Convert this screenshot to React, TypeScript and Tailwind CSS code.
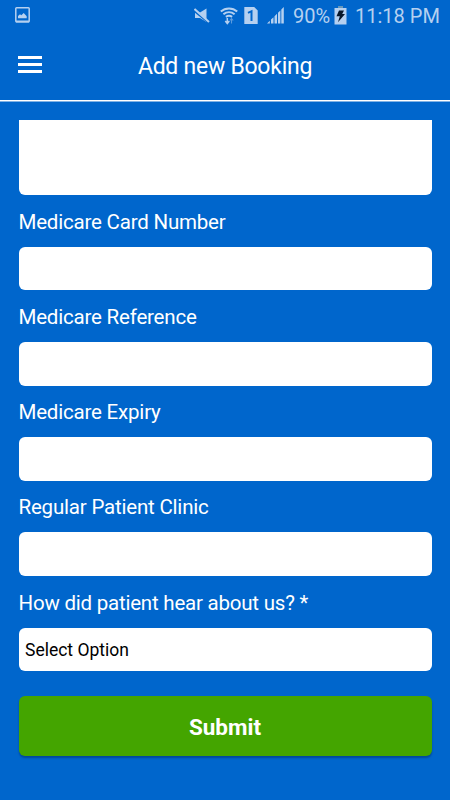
import { useState } from 'react';

interface Field {
  label: string;
  name: string;
}

const fields: Field[] = [
  { label: 'Medicare Card Number', name: 'cardNumber' },
  { label: 'Medicare Reference', name: 'reference' },
  { label: 'Medicare Expiry', name: 'expiry' },
  { label: 'Regular Patient Clinic', name: 'clinic' },
];

const StatusBar = () => (
  <div className="flex h-[31px] items-center justify-between pl-[15px] pr-[12px] text-[#b5d0f0]">
    <svg width="15" height="16" viewBox="0 0 15 16" fill="none" className="-mt-px">
      <rect x="0.8" y="0.8" width="13.4" height="14" rx="0.8" stroke="currentColor" strokeWidth="1.5" />
      <path d="M1 13.5h13v2H1z" fill="currentColor" />
      <path d="M3 11.3V9l2-1.7 1.3 1L8.7 6l3 3.2v2.1z" fill="currentColor" />
    </svg>
    <div className="flex items-center">
      <svg width="16" height="15" viewBox="0 0 16 15" className="mr-[10px]">
        <path d="M1 4.5h5L12.5.5v13.5L6 10H1z" fill="currentColor" />
        <path d="M.5 2.8l14 11.4" stroke="#0066cc" strokeWidth="2.4" />
        <path d="M.5 1l14.5 13" stroke="currentColor" strokeWidth="2" />
      </svg>
      <svg width="18" height="18" viewBox="0 0 18 18" fill="none" stroke="currentColor" className="mr-[6px]">
        <path d="M.8 4.6C5.5.4 12.5.4 17.2 4.6M3.4 7.3c3.3-2.8 7.9-2.8 11.2 0M5.9 9.9c1.9-1.5 4.3-1.5 6.2 0" strokeWidth="2" />
        <path d="M7.3 11v5M5.3 14l2 2.5 2-2.5" strokeWidth="1.5" />
        <path d="M11.5 16.5v-5M9.8 13.5l1.7-2 1.7 2" strokeWidth="1.1" opacity="0.5" />
      </svg>
      <svg width="14" height="17" viewBox="0 0 14 17" className="mr-[9px]">
        <path d="M.3 0h9.9l3.5 3.6V17H.3z" fill="currentColor" />
        <path d="M4 5.8l3.5-1.6v9.8" stroke="#0066cc" strokeWidth="2" fill="none" />
      </svg>
      <svg width="17" height="17" viewBox="0 0 17 17" fill="currentColor" className="mr-[9px]">
        <path d="M0 16.5L2.8 13.7v2.8H0zM4 12.5l2.5-2.3v6.3H4zM7.5 9.2l2.5-2.4v9.7H7.5zM11 5.8l2.4-2.3v13H11zM14.3 2.4L16.8 0v16.5h-2.5z" />
      </svg>
      <span className="w-[37px] whitespace-nowrap text-[20px] leading-[30px]">90%</span>
      <svg width="13" height="19" viewBox="0 0 13 19" className="ml-[4px] mr-[8px]">
        <path d="M4 0h5v2H4z" fill="#6998ba" />
        <path d="M.5 2h12v16.5H.5z" fill="currentColor" />
        <path d="M5 4.5h5L8.2 8h2.8l-7 8.3 1.8-6H2.5z" fill="#07172b" />
      </svg>
      <span className="w-[83px] whitespace-nowrap text-[20px] leading-[30px]">11:18 PM</span>
    </div>
  </div>
);

const Header = () => (
  <header className="grid h-[70px] grid-cols-[100px_250px_100px] items-center border-b border-white shadow-[0_1px_0_#80b2e5]">
    <button aria-label="Menu" className="mb-[3px] ml-[18px] flex w-6 flex-col gap-1">
      <span className="h-[3px] w-full bg-white" />
      <span className="h-[3px] w-full bg-white" />
      <span className="h-[3px] w-full bg-white" />
    </button>
    <h1 className="whitespace-nowrap pt-[2px] text-center text-[23px] leading-[30px] tracking-[-0.25px]">Add new Booking</h1>
  </header>
);

export default function App() {
  const [values, setValues] = useState<Record<string, string>>({});

  return (
    <div className="h-[800px] w-[450px] overflow-hidden bg-[#0066cc] font-['Roboto',sans-serif] text-white">
      <StatusBar />
      <Header />
      <form className="px-[18.5px] pt-[19px]" onSubmit={(e) => e.preventDefault()}>
        <div className="h-[74.9px] rounded-b-md bg-white" />
        {fields.map((field) => (
          <div key={field.name} className="h-[95.2px] pt-[12px]">
            <label htmlFor={field.name} className="block h-[40px] text-[20.5px] leading-[30px] tracking-[-0.2px]">
              {field.label}
            </label>
            <input
              id={field.name}
              value={values[field.name] ?? ''}
              onChange={(e) => setValues({ ...values, [field.name]: e.target.value })}
              className="block h-[43.5px] w-full rounded-md bg-white px-2 text-black outline-none"
            />
          </div>
        ))}
        <div className="pt-[12px]">
          <span className="block h-[40px] text-[20.5px] leading-[30px] tracking-[-0.22px]">
            How did patient hear about us? *
          </span>
          <button type="button" className="block h-[43.7px] w-full rounded-md bg-white px-[6.5px] pt-[2px] text-left text-[17.5px] text-black">
            Select Option
          </button>
        </div>
        <button
          type="submit"
          className="mt-[25px] block h-[60px] w-full rounded-md bg-[#44a500] pt-[3px] text-[22.5px] font-bold shadow-[0_2px_2px_rgba(0,30,80,0.4)]"
        >
          Submit
        </button>
      </form>
    </div>
  );
}
